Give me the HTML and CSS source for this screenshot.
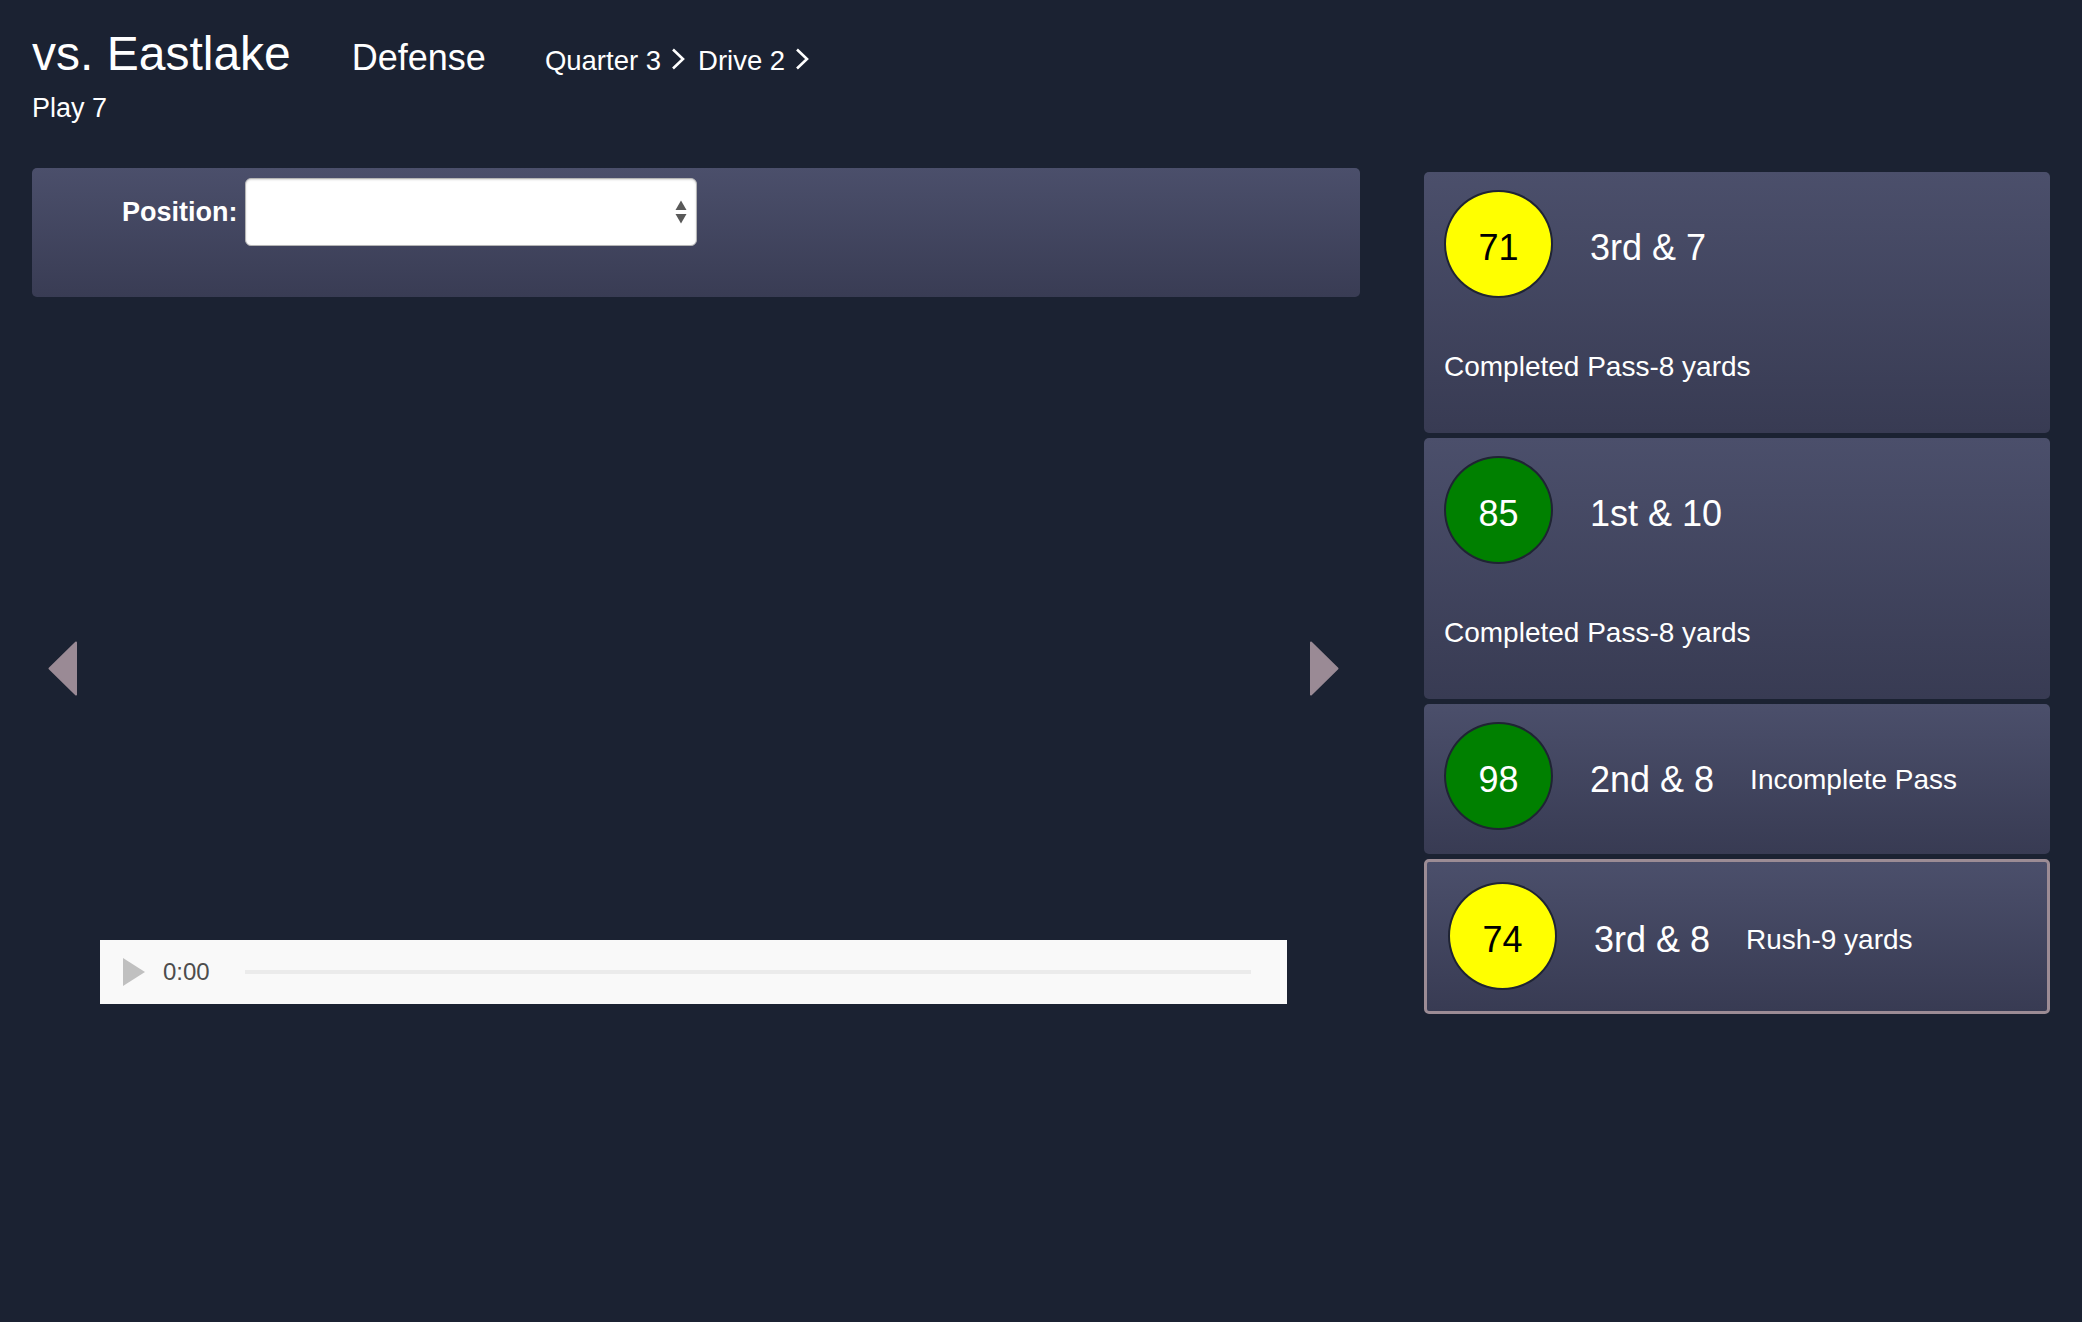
FILE: index.html
```html
<!DOCTYPE html>
<html lang="en">
<head>
<meta charset="utf-8">
<title>vs. Eastlake – Play 7</title>
<link rel="stylesheet" href="styles.css">
</head>
<body>
<div class="page">
  <header class="top">
    <div class="titles">
      <h1 class="opponent">vs. Eastlake</h1>
      <span class="unit">Defense</span>
      <nav class="crumbs">
        <span class="crumb">Quarter 3</span><svg class="chev" width="18" height="22" viewBox="0 0 18 22"><polyline points="4,1.5 14,11 4,20.5" fill="none" stroke="#fff" stroke-width="2.6"/></svg><span class="crumb">Drive 2</span><svg class="chev" width="18" height="22" viewBox="0 0 18 22"><polyline points="4,1.5 14,11 4,20.5" fill="none" stroke="#fff" stroke-width="2.6"/></svg>
      </nav>
    </div>
    <div class="play-no">Play 7</div>
  </header>

  <main class="layout">
    <section class="left">
      <div class="filter">
        <label class="filter-label">Position:</label>
        <div class="select">
          <svg class="select-arrows" width="14" height="24" viewBox="0 0 14 24"><polygon points="1.5,10 7,0.5 12.5,10" fill="#595959"/><polygon points="1.5,14 12.5,14 7,23.5" fill="#595959"/></svg>
        </div>
      </div>

      <div class="stage">
        <div class="nav prev"><svg width="29" height="55" viewBox="0 0 29 55"><polygon points="28,1.5 1.5,27.5 28,53.5" fill="#9a8a95" stroke="#9a8a95" stroke-width="2" stroke-linejoin="round"/></svg></div>
        <div class="viewer">
          <div class="video"></div>
          <div class="audio">
            <svg class="play-btn" width="22" height="28" viewBox="0 0 22 28"><polygon points="0,0 22,14 0,28" fill="#c0c0c0"/></svg>
            <span class="time">0:00</span>
            <div class="track"></div>
          </div>
        </div>
        <div class="nav next"><svg width="29" height="55" viewBox="0 0 29 55"><polygon points="1,1.5 27.5,27.5 1,53.5" fill="#9a8a95" stroke="#9a8a95" stroke-width="2" stroke-linejoin="round"/></svg></div>
      </div>
    </section>

    <aside class="plays">
      <div class="card">
        <div class="row">
          <div class="score yellow">71</div>
          <span class="down">3rd &amp; 7</span>
        </div>
        <div class="desc">Completed Pass-8 yards</div>
      </div>
      <div class="card">
        <div class="row">
          <div class="score green">85</div>
          <span class="down">1st &amp; 10</span>
        </div>
        <div class="desc">Completed Pass-8 yards</div>
      </div>
      <div class="card">
        <div class="row">
          <div class="score green">98</div>
          <span class="down">2nd &amp; 8</span><span class="result">Incomplete Pass</span>
        </div>
      </div>
      <div class="card selected">
        <div class="row">
          <div class="score yellow">74</div>
          <span class="down">3rd &amp; 8</span><span class="result">Rush-9 yards</span>
        </div>
      </div>
    </aside>
  </main>
</div>
</body>
</html>
```
FILE: styles.css
```css
html, body {
  margin: 0;
  padding: 0;
  background: #1b2232;
}
body {
  font-family: "Liberation Sans", Arial, Helvetica, sans-serif;
  color: #ffffff;
  min-height: 1322px;
}
.page {
  padding: 26px 32px 0 32px;
}

/* header */
.top {
  margin-bottom: 44px;
}
.titles {
  display: flex;
  align-items: baseline;
}
.opponent {
  margin: 0;
  font-size: 48px;
  font-weight: normal;
  line-height: 56px;
}
.unit {
  margin-left: 61px;
  font-size: 36px;
  line-height: 40px;
}
.crumbs {
  margin-left: 59px;
  font-size: 27.5px;
  line-height: 32px;
  white-space: nowrap;
}
.chev {
  vertical-align: baseline;
  margin: 0 11px 0 8px;
}
.play-no {
  margin-top: 10px;
  font-size: 27px;
  line-height: 32px;
}

/* layout */
.layout {
  display: grid;
  grid-template-columns: 1328px 626px;
  column-gap: 64px;
  align-items: start;
}

/* filter panel */
.filter {
  display: flex;
  align-items: center;
  padding: 10px 0 51px 90px;
  border-radius: 5px;
  background: linear-gradient(#4b4f6b, #393c54);
}
.filter-label {
  font-size: 27px;
  font-weight: bold;
  line-height: 32px;
}
.select {
  margin-left: 7px;
  width: 452px;
  height: 68px;
  box-sizing: border-box;
  background: #ffffff;
  border: 1px solid #b5b5b5;
  border-radius: 6px;
  box-shadow: inset 0 1px 2px rgba(0, 0, 0, 0.15);
  display: flex;
  align-items: center;
  justify-content: flex-end;
  padding-right: 8px;
}
.select-arrows {
  display: block;
}

/* stage */
.stage {
  display: flex;
  align-items: center;
}
.nav svg {
  display: block;
}
.prev {
  margin-left: 16px;
}
.next {
  margin-right: 21px;
}
.viewer {
  flex: 1;
  margin: 0 23px;
  padding-bottom: 35px;
}
.video {
  height: 643px;
}
.audio {
  height: 64px;
  background: #f9f9f9;
  display: flex;
  align-items: center;
  padding-left: 23px;
}
.play-btn {
  display: block;
}
.time {
  margin-left: 18px;
  font-size: 24px;
  color: #4d4d4d;
  line-height: 28px;
}
.track {
  flex: 1;
  height: 4px;
  margin: 0 36px 0 35px;
  background: #ebebeb;
}

/* play cards */
.plays {
  margin-top: 4px;
}
.card {
  margin-bottom: 5px;
  padding: 18px 20px 24px;
  border-radius: 5px;
  background: linear-gradient(#4b4f6b, #383b53);
}
.card.selected {
  border: 3px solid #9c8c95;
  padding: 20px 21px 21px;
}
.row {
  display: flex;
  align-items: center;
}
.score {
  width: 109px;
  height: 108px;
  box-sizing: border-box;
  border: 2px solid #1f2433;
  border-radius: 50%;
  display: flex;
  align-items: center;
  justify-content: center;
  padding-top: 7px;
  font-size: 36px;
  flex: none;
}
.score.yellow {
  background: #ffff00;
  color: #000000;
}
.score.green {
  background: #008000;
  color: #ffffff;
}
.down {
  margin-left: 37px;
  margin-top: 8px;
  font-size: 36px;
  line-height: 42px;
}
.result {
  margin-left: 36px;
  margin-top: 8px;
  font-size: 28px;
  line-height: 34px;
}
.desc {
  margin: 52px 0 25px;
  font-size: 28px;
  line-height: 34px;
}
```
